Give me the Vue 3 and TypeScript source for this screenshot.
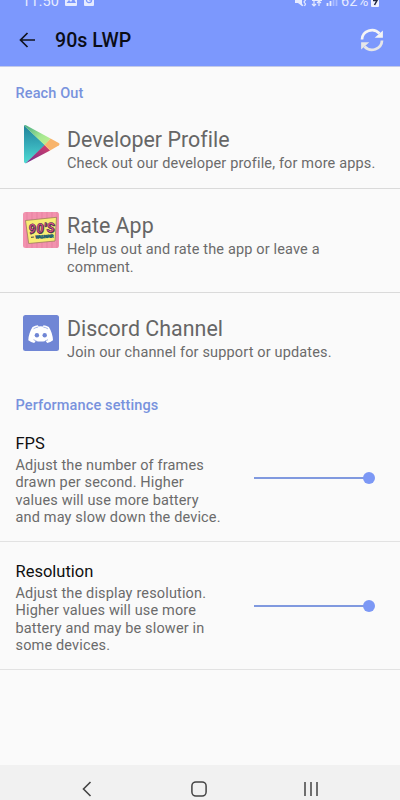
<script setup lang="ts">
import { ref } from 'vue'

interface LinkItem {
  icon: 'play' | 'nineties' | 'discord'
  title: string
  lines: string[]
}

interface SliderItem {
  title: string
  lines: string[]
  value: number
}

const links: LinkItem[] = [
  { icon: 'play', title: 'Developer Profile', lines: ['Check out our developer profile, for more apps.'] },
  { icon: 'nineties', title: 'Rate App', lines: ['Help us out and rate the app or leave a', 'comment.'] },
  { icon: 'discord', title: 'Discord Channel', lines: ['Join our channel for support or updates.'] },
]

const sliders = ref<SliderItem[]>([
  {
    title: 'FPS',
    lines: ['Adjust the number of frames', 'drawn per second. Higher', 'values will use more battery', 'and may slow down the device.'],
    value: 100,
  },
  {
    title: 'Resolution',
    lines: ['Adjust the display resolution.', 'Higher values will use more', 'battery and may be slower in', 'some devices.'],
    value: 100,
  },
])
</script>

<template>
  <div class="screen">
    <header class="top">
      <div class="status">
        <div class="status-left">
          <span class="clock">11:50</span>
          <svg class="status-icon" width="12" height="12" viewBox="0 0 12 12">
            <rect width="12" height="12" rx="1" fill="#e6ebff" />
            <path d="M1.5 9 4 6l2 2 2.500-4L11 9z" fill="#7c98fd" />
          </svg>
          <svg class="status-icon second" width="10" height="12" viewBox="0 0 10 12">
            <rect width="10" height="12" rx="1" fill="#e6ebff" />
            <circle cx="5" cy="6" r="2.600" fill="none" stroke="#7c98fd" stroke-width="1.200" />
            <path d="M5 4v2h2" fill="none" stroke="#7c98fd" />
          </svg>
        </div>
        <div class="status-right">
          <svg width="44" height="14" viewBox="0 0 44 14">
            <path d="M1 4h3l4-3v11L4 9H1z" fill="#e6ebff" />
            <path d="m1 1 8 11M10 4l1.500 2-1.500 2 1.500 2-1 2" fill="none" stroke="#e6ebff" stroke-width="1.200" />
            <path d="M20 7v5M18 10l2 2 2-2M25 12V7M23 9l2-2 2 2M18 6.500h10" fill="none" stroke="#e6ebff" stroke-width="1.200" />
            <path d="M33.500 12V9M36.500 12V7" stroke="#e6ebff" stroke-width="1.800" />
            <path d="M39.500 12V4M42.500 12V1" stroke="#a9bbff" stroke-width="1.800" />
          </svg>
          <span class="percent">62%</span>
          <svg width="8" height="13" viewBox="0 0 8 13">
            <rect width="8" height="13" rx="1" fill="#eef1ff" />
            <path d="M2 6.500h4L3.500 11" fill="none" stroke="#20263f" stroke-width="1.500" />
          </svg>
        </div>
      </div>
      <div class="toolbar">
        <svg class="back" width="17" height="16" viewBox="0 0 17 16">
          <path d="M8.500 1 1.500 8l7 7M1.500 8H16" fill="none" stroke="#10131f" stroke-width="1.700" />
        </svg>
        <h1>90s LWP</h1>
        <svg class="refresh" width="24" height="24" viewBox="0 0 24 24">
          <path d="M2 11.500A10 9.500 0 0 1 19.500 5.500" fill="none" stroke="#f5f5f5" stroke-width="2.700" />
          <path d="M22.900 2.500V9.700h-8.200z" fill="#f5f5f5" />
          <path d="M22 12.500A10 9.500 0 0 1 4.500 18.500" fill="none" stroke="#e6e6e8" stroke-width="2.700" />
          <path d="M1.100 21.500V14.300h8.200z" fill="#e6e6e8" />
        </svg>
      </div>
    </header>

    <main>
      <h2 class="section reach">Reach Out</h2>
      <section v-for="item in links" :key="item.title" class="link-row" :class="item.icon">
        <svg v-if="item.icon === 'play'" class="icon" width="38" height="40" viewBox="0 0 38 40">
          <defs>
            <linearGradient id="teal" x1="0" y1="0" x2="0" y2="1">
              <stop offset="0" stop-color="#20839a" />
              <stop offset=".5" stop-color="#36acb9" />
              <stop offset="1" stop-color="#4fdcd2" />
            </linearGradient>
            <linearGradient id="green" x1="0" y1="0" x2="1" y2="1">
              <stop offset="0" stop-color="#45aa84" />
              <stop offset=".6" stop-color="#a5e890" />
              <stop offset="1" stop-color="#c2ef91" />
            </linearGradient>
            <linearGradient id="red" x1="0" y1="1" x2="1" y2="0">
              <stop offset="0" stop-color="#6c2c91" />
              <stop offset="1" stop-color="#d93f67" />
            </linearGradient>
          </defs>
          <path d="M2 1.500 23 21 4 39.300Q2 39.500 2 37.500z" fill="url(#teal)" />
          <path d="M2 1.500Q3 .5 4.500 1.500L28.500 14.500 22.800 21.200z" fill="url(#green)" />
          <path d="M3.500 39.500 22.600 21l5.500 5.500z" fill="url(#red)" />
          <path d="m28.500 14.500 8.200 4.500q1.600 1.200 0 2.400l-8.600 5.100-5.500-5.500z" fill="#f8b46b" />
        </svg>
        <svg v-else-if="item.icon === 'nineties'" class="icon" width="38" height="38" viewBox="0 0 38 38">
          <rect x="1" y="1" width="36" height="36" rx="2.500" fill="#f292ae" />
          <path d="M5 1v36M10 1v36M15 1v36M20 1v36M25 1v36M30 1v36M35 1v36" stroke="#e783a2" stroke-width="1" />
          <path d="m3.500 9.500 31-3.200L33 30 6.700 32.500z" fill="#f8ed74" stroke="#917456" stroke-width=".7" />
          <text x="7" y="22.500" class="logo-shadow" textLength="26" transform="rotate(-4 18 18)">90'S</text>
          <text x="6.400" y="21.800" class="logo-text" textLength="26" transform="rotate(-4 18 18)">90'S</text>
          <path d="m9 26.300 3-.3" stroke="#5a5650" stroke-width="1.200" />
          <text x="13.500" y="27" class="logo-small" textLength="18" transform="rotate(-3 21 26)">WALLPAPER</text>
        </svg>
        <svg v-else class="icon" width="38" height="38" viewBox="0 0 38 38">
          <rect x="1" y="1" width="36" height="36" rx="2.500" fill="#7086d5" />
          <path d="M10.500 13q3-1.600 5.400-1.700l.7 1.200q2-.3 4.200 0l.7-1.200q2.400.1 5.400 1.700 3.800 6.300 4.100 13.200-2.600 2.300-5.800 2.700l-1.500-2q-5 1.300-10 0l-1.500 2q-3.200-.4-5.900-2.700.3-6.900 4.200-13.200z" fill="#fff" />
          <circle cx="14.900" cy="21.300" r="2.200" fill="#7086d5" />
          <circle cx="22.700" cy="21.300" r="2.200" fill="#7086d5" />
          <path d="M11.500 14.800q2.300-1.400 4.600-1.700M21.300 13.100q2.400.3 4.600 1.700M11.500 25.700q2 1 3 1.200M26 25.700q-2 1-3 1.200" fill="none" stroke="#7086d5" stroke-width=".6" />
        </svg>
        <div class="link-copy">
          <h3>{{ item.title }}</h3>
          <p><span v-for="line in item.lines" :key="line">{{ line }}</span></p>
        </div>
      </section>

      <h2 class="section performance">Performance settings</h2>
      <section v-for="item in sliders" :key="item.title" class="slider-row">
        <div class="slider-copy">
          <h3>{{ item.title }}</h3>
          <p><span v-for="line in item.lines" :key="line">{{ line }}</span></p>
        </div>
        <div class="slider">
          <div class="filled" :style="{ width: item.value + '%' }"></div>
          <div class="thumb"></div>
        </div>
      </section>
    </main>

    <nav>
      <svg width="10" height="16" viewBox="0 0 10 16">
        <path d="M8.500 1 1.500 8l7 7" fill="none" stroke="#444" stroke-width="1.600" />
      </svg>
      <svg class="home" width="16" height="16" viewBox="0 0 16 16">
        <rect x=".9" y=".9" width="14.200" height="14.200" rx="4" fill="none" stroke="#444" stroke-width="1.500" />
      </svg>
      <svg width="14" height="16" viewBox="0 0 14 16">
        <path d="M1 1v14M7 1v14M13 1v14" stroke="#444" stroke-width="1.500" />
      </svg>
    </nav>
  </div>
</template>

<style>
body {
  background: #fafafa;
}
</style>

<style scoped>
.screen {
  width: 400px;
  height: 800px;
  overflow: hidden;
  display: flex;
  flex-direction: column;
  background: #fafafa;
  font-family: Roboto, sans-serif;
}
svg {
  display: block;
  flex: none;
}
h1, h2, h3, p {
  margin: 0;
  font-weight: 400;
}
.top {
  height: 66px;
  flex: none;
  background: #7c98fd;
  border-bottom: 1px solid #c3cae8;
}
.status {
  height: 12px;
  display: flex;
  justify-content: space-between;
  padding: 0 21px 0 22px;
  color: #e6ebff;
}
.status-left, .status-right {
  display: flex;
  margin-top: -6px;
}
.clock, .percent {
  height: 17px;
  margin-top: -1px;
  font-size: 14.500px;
  line-height: 17px;
  letter-spacing: .2px;
}
.clock {
  width: 43px;
}
.percent {
  width: 27px;
}
.status-right {
  gap: 3px;
}
.status-left {
  align-items: flex-start;
}
.second {
  margin-left: 7px;
}
.toolbar {
  height: 55px;
  display: flex;
  align-items: center;
  padding: 0 16px 0 19px;
}
h1 {
  margin-left: 19px;
  padding-top: 3px;
  flex: 1;
  font-size: 19.600px;
  line-height: 24px;
  font-weight: 500;
  color: #0b0d16;
}
main {
  flex: 1;
}
.section {
  padding-left: 15.500px;
  font-size: 14.500px;
  line-height: 18px;
  font-weight: 500;
  letter-spacing: .12px;
  color: #7892dd;
}
.reach {
  height: 17px;
  padding-top: 18px;
}
.link-row {
  display: flex;
  padding-left: 22px;
  border-bottom: 1px solid #dadada;
}
.play {
  height: 70px;
  padding-top: 16px;
}
.nineties {
  height: 81px;
  padding-top: 22px;
}
.discord {
  height: 81px;
  padding-top: 21px;
  border: 0;
}
.play .icon {
  margin-top: 6px;
}
.link-copy {
  margin-left: 7px;
  padding-top: 2px;
}
.play .link-copy {
  padding-top: 9px;
}
.link-copy h3 {
  font-size: 21.400px;
  line-height: 26px;
  color: #666;
  letter-spacing: .03px;
}
p {
  margin-top: 2px;
  font-size: 14.500px;
  line-height: 17.500px;
  letter-spacing: .15px;
  color: #6b6b6b;
}
p span {
  display: block;
  white-space: nowrap;
}
.performance {
  height: 17px;
  padding-top: 2px;
}
.slider-row {
  display: flex;
  justify-content: space-between;
  align-items: center;
  height: 127px;
  padding: 0 31px 0 15.500px;
  border-bottom: 1.500px solid #e2e2e2;
}
.slider-copy {
  padding-top: 4px;
}
.slider-copy h3 {
  font-size: 16.500px;
  line-height: 22px;
  color: #101010;
}
.slider {
  width: 115px;
  position: relative;
}
.filled {
  height: 2px;
  background: #8099df;
}
.thumb {
  position: absolute;
  right: -6px;
  top: -5px;
  width: 12px;
  height: 12px;
  border-radius: 50%;
  background: #7c98f5;
}
.logo-text, .logo-shadow {
  font: italic 700 13px Roboto, sans-serif;
  fill: #e5548a;
  stroke: #43304e;
  stroke-width: .5px;
}
.logo-shadow {
  fill: #43304e;
}
.logo-small {
  font: 700 4px Roboto, sans-serif;
  fill: #256170;
  stroke: #256170;
  stroke-width: .5px;
}
nav {
  height: 35px;
  flex: none;
  display: flex;
  justify-content: space-between;
  box-sizing: border-box;
  padding: 16px 82px 0 82px;
  background: #f1f1f1;
}
.home {
  margin-left: 2px;
}
</style>
